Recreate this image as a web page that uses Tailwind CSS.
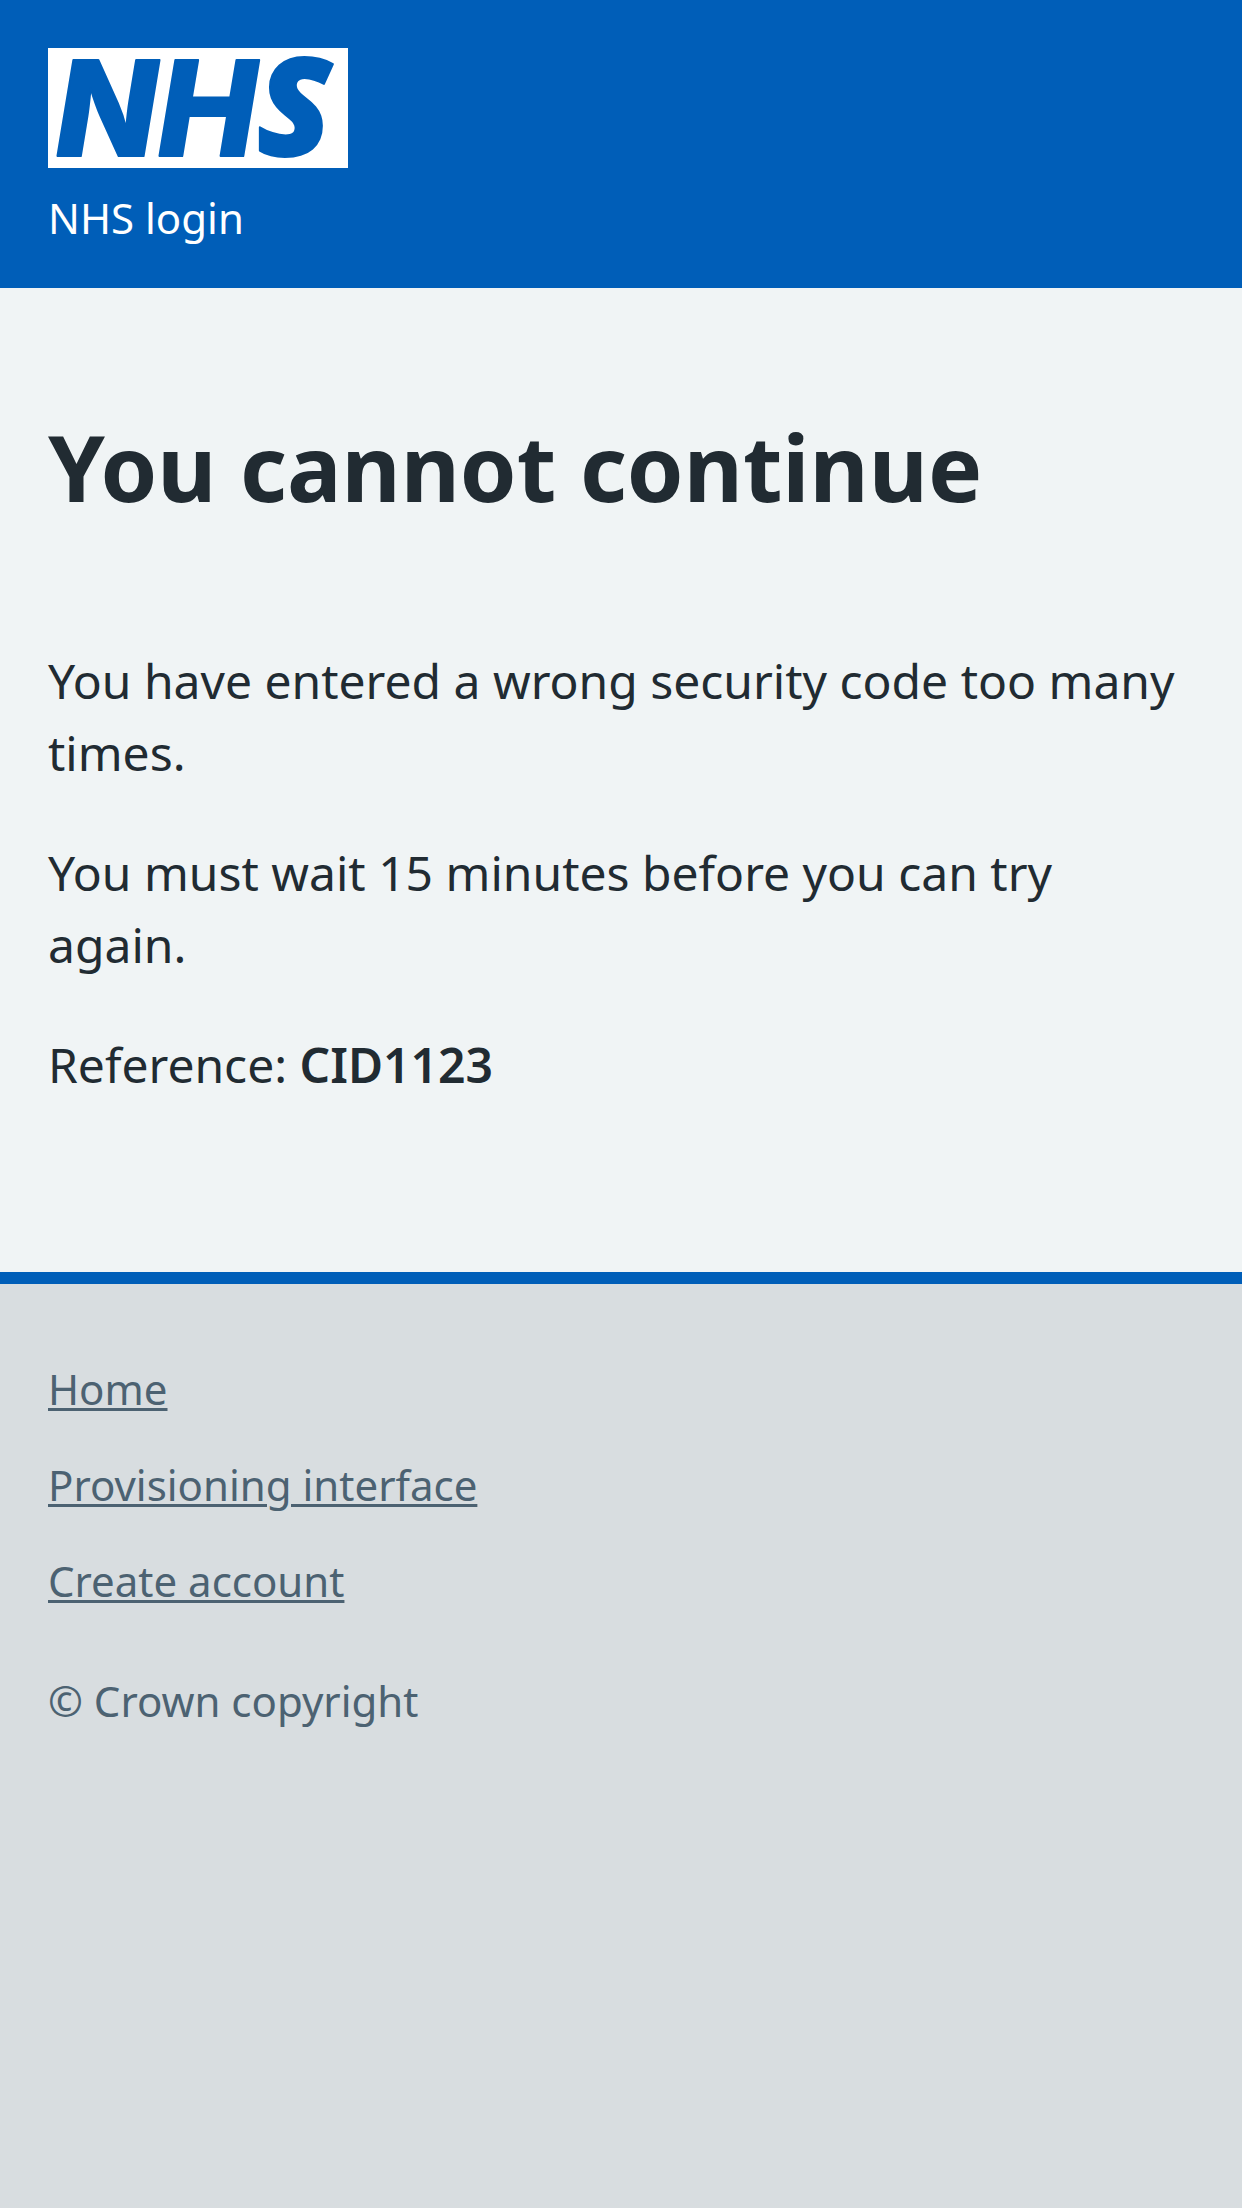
<!DOCTYPE html>
<html lang="en">
<head>
<meta charset="utf-8">
<meta name="viewport" content="width=device-width, initial-scale=1">
<title>You cannot continue - NHS login</title>
<script src="https://cdn.jsdelivr.net/npm/@tailwindcss/browser@4"></script>
</head>
<body class="flex min-h-screen flex-col bg-[#d8dde0] font-['Noto_Sans',sans-serif] text-[#212b32]">
  <header class="flex flex-col items-start gap-5 bg-[#005eb8] px-12 pt-12 pb-10 text-white">
    <svg class="h-[120px] w-[300px] overflow-visible bg-white" viewBox="0 0 300 120" role="img" aria-label="NHS">
      <g class="fill-[#005eb8] stroke-[#005eb8] stroke-[2px] [stroke-linejoin:round]">
        <g class="font-['Inter',sans-serif] text-[132px] font-extrabold italic">
          <text x="8" y="108">N</text><text x="110" y="108">H</text>
        </g>
        <text x="209" y="108" class="font-['Open_Sans',sans-serif] text-[136px] font-extrabold italic">S</text>
      </g>
    </svg>
    <p class="text-[42px] leading-[60px]">NHS login</p>
  </header>
  <main class="bg-[#f0f4f5] px-12 pt-[125px] pb-[171px]">
    <h1 class="mb-[124px] text-[91px] leading-[108px] font-bold">You cannot continue</h1>
    <div class="flex flex-col gap-12 text-[48px] leading-[72px]">
      <p>You have entered a wrong security code too many times.</p>
      <p>You must wait 15 minutes before you can try again.</p>
      <p>Reference: <strong class="font-semibold">CID1123</strong></p>
    </div>
  </main>
  <footer class="border-t-[12px] border-[#005eb8] px-12 pt-[75px] pb-12 text-[42px] leading-[60px] text-[#4c6272]">
    <ul class="mb-[60px] flex flex-col items-start gap-9">
      <li><a href="#" class="underline decoration-[3px] underline-offset-[3px]">Home</a></li>
      <li><a href="#" class="underline decoration-[3px] underline-offset-[3px]">Provisioning interface</a></li>
      <li><a href="#" class="underline decoration-[3px] underline-offset-[3px]">Create account</a></li>
    </ul>
    <p>© Crown copyright</p>
  </footer>
</body>
</html>
